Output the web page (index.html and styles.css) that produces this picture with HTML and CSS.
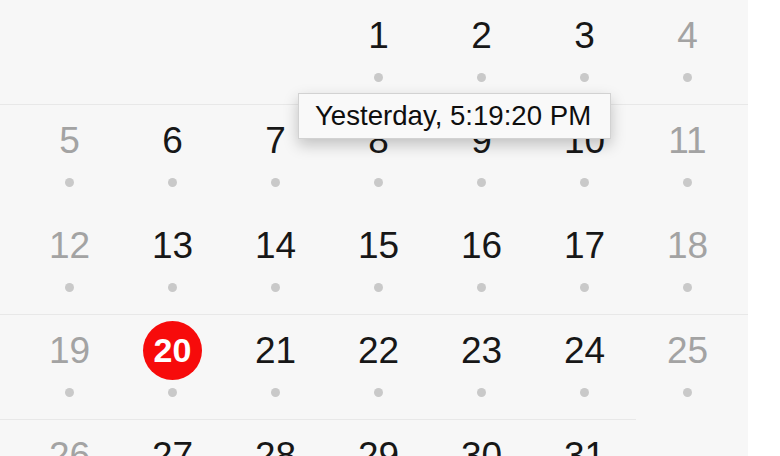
FILE: index.html
```html
<!DOCTYPE html>
<html lang="en">
<head>
<meta charset="utf-8">
<title>Calendar</title>
<link rel="stylesheet" href="styles.css">
</head>
<body>
<div class="calendar">
  <div class="week week--first">
    <div class="day day--empty"></div>
    <div class="day day--empty"></div>
    <div class="day day--empty"></div>
    <div class="day"><span class="num">1</span><span class="dot"></span></div>
    <div class="day"><span class="num">2</span><span class="dot"></span></div>
    <div class="day"><span class="num">3</span><span class="dot"></span></div>
    <div class="day day--weekend"><span class="num">4</span><span class="dot"></span></div>
  </div>
  <div class="week week--ruled">
    <div class="day day--weekend"><span class="num">5</span><span class="dot"></span></div>
    <div class="day"><span class="num">6</span><span class="dot"></span></div>
    <div class="day"><span class="num">7</span><span class="dot"></span></div>
    <div class="day"><span class="num">8</span><span class="dot"></span></div>
    <div class="day"><span class="num">9</span><span class="dot"></span></div>
    <div class="day"><span class="num">10</span><span class="dot"></span></div>
    <div class="day day--weekend"><span class="num">11</span><span class="dot"></span></div>
  </div>
  <div class="week">
    <div class="day day--weekend"><span class="num">12</span><span class="dot"></span></div>
    <div class="day"><span class="num">13</span><span class="dot"></span></div>
    <div class="day"><span class="num">14</span><span class="dot"></span></div>
    <div class="day"><span class="num">15</span><span class="dot"></span></div>
    <div class="day"><span class="num">16</span><span class="dot"></span></div>
    <div class="day"><span class="num">17</span><span class="dot"></span></div>
    <div class="day day--weekend"><span class="num">18</span><span class="dot"></span></div>
  </div>
  <div class="week week--ruled">
    <div class="day day--weekend"><span class="num">19</span><span class="dot"></span></div>
    <div class="day day--today"><span class="num">20</span><span class="dot"></span></div>
    <div class="day"><span class="num">21</span><span class="dot"></span></div>
    <div class="day"><span class="num">22</span><span class="dot"></span></div>
    <div class="day"><span class="num">23</span><span class="dot"></span></div>
    <div class="day"><span class="num">24</span><span class="dot"></span></div>
    <div class="day day--weekend"><span class="num">25</span><span class="dot"></span></div>
  </div>
  <div class="week week--ruled week--partial">
    <div class="day day--weekend"><span class="num">26</span><span class="dot"></span></div>
    <div class="day"><span class="num">27</span><span class="dot"></span></div>
    <div class="day"><span class="num">28</span><span class="dot"></span></div>
    <div class="day"><span class="num">29</span><span class="dot"></span></div>
    <div class="day"><span class="num">30</span><span class="dot"></span></div>
    <div class="day"><span class="num">31</span><span class="dot"></span></div>
  </div>
  <div class="tooltip">Yesterday, 5:19:20 PM</div>
</div>
</body>
</html>
```

FILE: styles.css
```css
html, body {
  margin: 0;
  padding: 0;
  background: #ffffff;
}

body {
  width: 780px;
  height: 456px;
  overflow: hidden;
  font-family: "Liberation Sans", Arial, sans-serif;
}

.calendar {
  position: relative;
  width: 748px;
  height: 456px;
  background: #f7f7f7;
  overflow: hidden;
}

.week {
  box-sizing: border-box;
  height: 105px;
  padding-left: 18px;
  display: grid;
  grid-template-columns: repeat(7, 103px);
  border-top: 1px solid transparent;
}

.week--first {
  height: 104px;
  border-top: 0;
}

.week--ruled {
  border-top-color: #e8e8e8;
}

.week--partial {
  width: 636px;
}

.day {
  display: flex;
  flex-direction: column;
  align-items: center;
  padding-top: 6px;
}

.num {
  display: block;
  min-width: 59px;
  height: 59px;
  line-height: 59px;
  text-align: center;
  font-size: 37px;
  color: #171717;
  border-radius: 50%;
}

.day--weekend .num {
  color: #a3a3a3;
}

.day--today .num {
  width: 59px;
  background: #f70b0b;
  color: #ffffff;
  font-weight: bold;
  font-size: 34px;
}

.dot {
  display: block;
  width: 9px;
  height: 9px;
  margin-top: 8px;
  border-radius: 50%;
  background: #c9c9c9;
}

.day--empty .num,
.day--empty .dot {
  display: none;
}

.tooltip {
  position: absolute;
  left: 298px;
  top: 93px;
  box-sizing: border-box;
  width: 313px;
  height: 46px;
  padding-left: 16px;
  line-height: 44px;
  font-size: 27.6px;
  color: #0e0e0e;
  background: #f9f9f9;
  border: 1px solid #d2d2d2;
  box-shadow: 0 6px 14px rgba(0, 0, 0, 0.22);
  white-space: nowrap;
}
```
